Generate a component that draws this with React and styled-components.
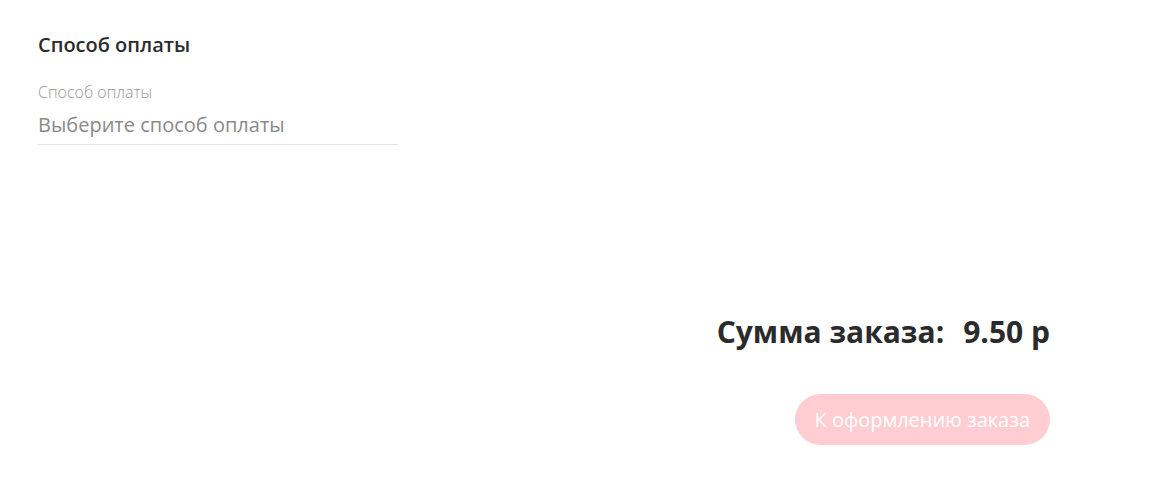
import React from 'react'
import styled, { createGlobalStyle } from 'styled-components'

const GlobalStyle = createGlobalStyle`
  body {
    margin: 0;
    background: #fff;
    font-family: "Open Sans", "Noto Sans", sans-serif;
  }
`

const Page = styled.div`
  width: 1050px;
  padding: 32px 0 40px 38px;
  box-sizing: border-box;
  display: flex;
  flex-direction: column;
`

const Section = styled.section`
  width: 360px;
`

const Title = styled.h3`
  margin: 0;
  font-size: 20px;
  line-height: 26px;
  font-weight: 600;
  color: #2b2b2b;
`

const Field = styled.div`
  margin-top: 24px;
  border-bottom: 1px solid #e4e4e4;
  padding-bottom: 5px;
`

const Label = styled.div`
  font-size: 16px;
  line-height: 20px;
  font-weight: 300;
  color: #9e9696;
`

const Placeholder = styled.div`
  margin-top: 9px;
  font-size: 20px;
  line-height: 28px;
  color: #8a8a8a;
`

const Summary = styled.div`
  margin-top: 167px;
  display: flex;
  flex-direction: column;
  align-items: flex-end;
`

const Total = styled.div`
  display: flex;
  gap: 19px;
  font-size: 30px;
  line-height: 40px;
  font-weight: 700;
  color: #2b2b2b;
`

const Button = styled.button`
  margin-top: 42px;
  height: 51px;
  padding: 0 20px;
  border: none;
  border-radius: 26px;
  background: #ffcdd2;
  color: #fff;
  font-family: inherit;
  font-size: 20px;
  cursor: default;
`

export default function App() {
  return (
    <>
      <GlobalStyle />
      <Page>
        <Section>
          <Title>Способ оплаты</Title>
          <Field>
            <Label>Способ оплаты</Label>
            <Placeholder>Выберите способ оплаты</Placeholder>
          </Field>
        </Section>
        <Summary>
          <Total>
            <span>Сумма заказа:</span>
            <span>9.50 р</span>
          </Total>
          <Button disabled>К оформлению заказа</Button>
        </Summary>
      </Page>
    </>
  )
}
